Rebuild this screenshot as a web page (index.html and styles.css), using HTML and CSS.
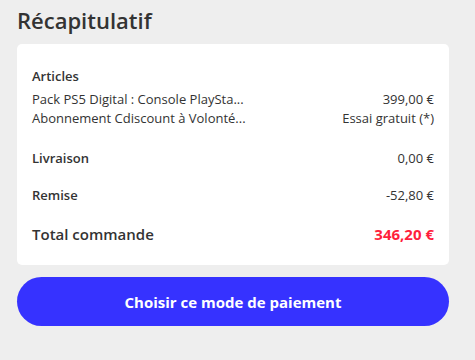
FILE: index.html
```html
<!DOCTYPE html>
<html lang="fr">
<head>
  <meta charset="UTF-8">
  <title>Récapitulatif</title>
  <link rel="stylesheet" href="styles.css">
</head>
<body>

  <h2 class="titre">Récapitulatif</h2>

  <div class="recap">
    <div class="bloc">
      <div class="label">Articles</div>
      <div class="ligne">
        <span>Pack PS5 Digital : Console PlaySta...</span>
        <span>399,00 €</span>
      </div>
      <div class="ligne">
        <span>Abonnement Cdiscount à Volonté...</span>
        <span>Essai gratuit (*)</span>
      </div>
    </div>

    <div class="ligne bloc">
      <span class="label">Livraison</span>
      <span>0,00 €</span>
    </div>

    <div class="ligne bloc">
      <span class="label">Remise</span>
      <span>-52,80 €</span>
    </div>

    <div class="ligne total">
      <span>Total commande</span>
      <span class="prix">346,20 €</span>
    </div>
  </div>

  <button type="button" class="btn-paiement">Choisir ce mode de paiement</button>

</body>
</html>
```

FILE: styles.css
```css
body {
  margin: 0;
  padding: 0 26px 0 17px;
  background: #eeeeee;
  font-family: "Open Sans", Arial, sans-serif;
  color: #333;
}
.titre {
  margin: 0;
  padding-top: 5px;
  height: 39px;
  font-size: 22px;
  font-weight: 600;
  color: #333;
}
.recap {
  background: white;
  border-radius: 5px;
  padding: 23px 15px 21px;
  font-size: 13px;
}
.bloc {
  margin-bottom: 21px;
}
.label {
  font-weight: 600;
  font-size: 13px;
  margin-bottom: 5px;
}
.ligne {
  display: flex;
  justify-content: space-between;
  gap: 20px;
  line-height: 19px;
}
.ligne.bloc {
  margin-bottom: 18px;
}
.ligne.bloc .label {
  margin-bottom: 0;
}
.total {
  margin-top: 20px;
  font-size: 15px;
  font-weight: 600;
}
.prix {
  font-weight: 700;
  color: #ff1f3d;
}
.btn-paiement {
  display: block;
  width: 100%;
  height: 49px;
  margin-top: 12px;
  background: #3632ff;
  color: white;
  border: none;
  border-radius: 25px;
  font-family: "Open Sans", Arial, sans-serif;
  font-size: 15px;
  font-weight: 700;
  cursor: pointer;
}
```
